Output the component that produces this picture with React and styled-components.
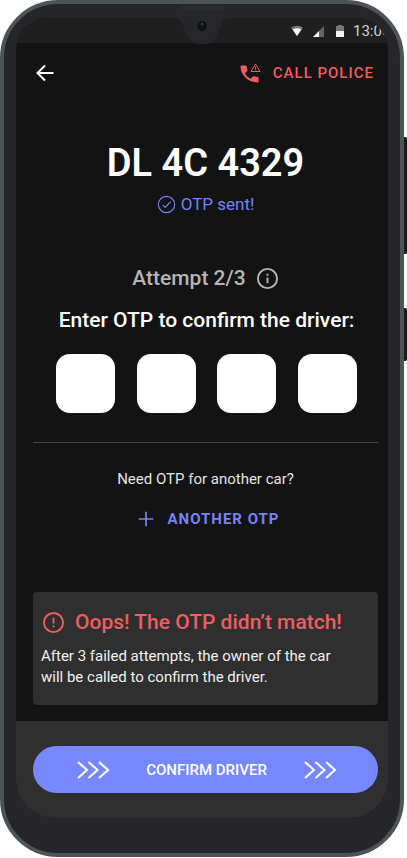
import React from "react";
import styled, { createGlobalStyle } from "styled-components";

const GlobalStyle = createGlobalStyle`
  *, *::before, *::after { box-sizing: border-box; }
  body { margin: 0; background: #ffffff; font-family: Roboto, "Open Sans", sans-serif; }
  button, input { font: inherit; }
`;

const Page = styled.div`
  display: flex;
  min-height: 100vh;
  padding: 0 3px 1px 0;
`;

const Phone = styled.div`
  position: relative;
  flex: 1;
  display: flex;
  min-width: 0;
  padding: 14px 12px 35px;
  border: 4px solid #4b5456;
  border-radius: 58px;
  background: #26252a;
`;

const SideButton = styled.span`
  position: absolute;
  top: ${(p) => p.$top}px;
  right: -7px;
  width: 3px;
  height: ${(p) => p.$size}px;
  border-radius: 0 2px 2px 0;
  background: #171b1b;
`;

const Notch = styled.svg`
  position: absolute;
  top: 0;
  left: 50%;
  width: 64px;
  height: 40px;
  transform: translateX(-50%);
`;

const Screen = styled.div`
  flex: 1;
  display: flex;
  flex-direction: column;
  min-width: 0;
  overflow: hidden;
  border-radius: 32px 32px 38px 38px;
  background: #131313;
`;

const StatusBar = styled.div`
  display: flex;
  align-items: center;
  justify-content: flex-end;
  height: 25px;
  background: #1f1f1f;
  color: #d0d0d0;
  font-size: 15px;
`;

const StatusIcons = styled.svg`
  width: 56px;
  height: 14px;
  margin-right: 6px;
`;

const Clock = styled.time`
  flex: none;
  width: 35px;
  white-space: nowrap;
`;

const TopBar = styled.header`
  display: flex;
  align-items: center;
  justify-content: space-between;
  padding: 16px 14px 0 17px;
`;

const PlainButton = styled.button`
  display: inline-flex;
  align-items: center;
  padding: 0;
  border: 0;
  background: none;
  color: ${(p) => p.$color};
  font-size: 15px;
  font-weight: 500;
  line-height: 24px;
  letter-spacing: ${(p) => (p.$wide ? "1px" : "normal")};
  gap: 11px;
  height: 28px;
  cursor: pointer;
`;

const Main = styled.main`
  flex: 1;
  display: flex;
  flex-direction: column;
  align-items: center;
  padding: 0 10px 16px 17px;
`;

const Plate = styled.h1`
  margin: 52px 0 0;
  color: #ffffff;
  font-size: 38px;
  font-weight: 600;
  line-height: 48px;
`;

const Sent = styled.p`
  display: flex;
  align-items: center;
  gap: 5px;
  margin: 5px 0 0;
  color: #7583f5;
  font-size: 17px;
  line-height: 24px;
`;

const Attempt = styled.p`
  display: flex;
  align-items: center;
  gap: 10px;
  margin: 50px 0 0;
  color: #b5b5b5;
  font-size: 21px;
  font-weight: 500;
  line-height: 24px;
`;

const OtpForm = styled.fieldset`
  display: flex;
  flex-direction: column;
  align-items: center;
  align-self: stretch;
  min-width: 0;
  margin: 0;
  padding: 0 21px 0 23px;
  border: 0;
`;

const OtpLegend = styled.legend`
  margin: 0 auto;
  padding: 17px 0;
  color: #ffffff;
  font-size: 21px;
  font-weight: 500;
  line-height: 26px;
  white-space: nowrap;
`;

const Digits = styled.div`
  display: flex;
  justify-content: space-between;
  align-self: stretch;
  margin-top: 4px;
`;

const Digit = styled.input`
  width: 59px;
  height: 59px;
  padding: 0;
  border: 0;
  border-radius: 14px;
  background: #ffffff;
  color: #131313;
  font-size: 28px;
  text-align: center;
`;

const Divider = styled.hr`
  align-self: stretch;
  height: 1px;
  margin: 29px 0 0;
  border: 0;
  background: #484848;
`;

const Question = styled.p`
  margin: 24px 0 0;
  color: #e4e4e4;
  font-size: 15px;
  line-height: 24px;
`;

const AnotherOtp = styled(PlainButton)`
  gap: 14px;
  margin-top: 14px;
  padding-left: 6px;
  font-weight: 700;
`;

const Alert = styled.section`
  align-self: stretch;
  margin-top: auto;
  padding: 16px 8px 17px;
  border-radius: 4px;
  background: #2f2f2f;
`;

const AlertTitle = styled.h2`
  display: flex;
  align-items: center;
  gap: 10px;
  margin: 0;
  padding-left: 1px;
  color: #ef5d5e;
  font-size: 21px;
  font-weight: 500;
  line-height: 28px;
  white-space: nowrap;
`;

const AlertText = styled.p`
  max-width: 310px;
  margin: 10px 0 0;
  color: #f0f0f0;
  font-size: 15px;
  line-height: 21px;
`;

const Footer = styled.footer`
  padding: 25px 10px 25px 17px;
  background: #2f2f2f;
`;

const Confirm = styled.button`
  display: flex;
  align-items: center;
  justify-content: space-between;
  width: 100%;
  height: 47px;
  padding: 0 41px 0 43px;
  border: 0;
  border-radius: 24px;
  background: #7788ff;
  color: #ffffff;
  font-size: 15px;
  font-weight: 500;
  cursor: pointer;
`;

function Icon({ size = 24, width = 2, children, ...rest }) {
  return (
    <svg width={size} height={size} viewBox="0 0 24 24" fill="none" stroke="currentColor" strokeWidth={width} aria-hidden="true" {...rest}>
      {children}
    </svg>
  );
}

function Chevrons() {
  return (
    <svg width="34" height="20" viewBox="0 0 34 20" fill="none" stroke="#fff" strokeWidth="2" aria-hidden="true">
      <path d="M2 2l9 8-9 8M12.500 2l9 8-9 8M23 2l9 8-9 8" />
    </svg>
  );
}

export default function App() {
  return (
    <Page>
      <GlobalStyle />
      <Phone>
        <SideButton $top={133} $size={117} />
        <SideButton $top={304} $size={53} />
        <Screen>
          <StatusBar>
            <StatusIcons viewBox="0 0 56 14" aria-hidden="true">
              <path d="M0 3.500Q6 0 12 3.500L6 12z" fill="#777" />
              <path d="M1.500 5.500Q6 3 10.500 5.500L6 12z" fill="#f2f2f2" />
              <path d="M22 13L33 2v11z" fill="#666" />
              <path d="M22 13l6-6v6z" fill="#f2f2f2" />
              <path d="M45 2h2V1h4v1h2v5h-8z" fill="#777" />
              <path d="M45 7h8v6h-8z" fill="#f2f2f2" />
            </StatusIcons>
            <Clock>13:00</Clock>
          </StatusBar>
          <TopBar>
            <PlainButton $color="#ffffff" aria-label="Back">
              <Icon>
                <path d="M20.500 12H5M12 4.500L4.500 12l7.500 7.500" strokeLinejoin="miter" />
              </Icon>
            </PlainButton>
            <PlainButton $color="#ef5d5e" $wide>
              <svg width="22" height="22" viewBox="0 0 22 22" aria-hidden="true">
                <path
                  d="M1.500 3.500h4.200q.8 0 1 .9.200 2 .8 3.600.2.600-.2 1.100L5 11.500c1.500 2.500 3 4 5.600 5.200l2.300-2.100q.5-.5 1.200-.3 1.800.6 3.700.7.800.1.800.9v3.600q0 1-1 1C8.300 20.500.500 13 .500 4.500q0-1 1-1z"
                  fill="currentColor"
                />
                <path d="M15.500 2l4.500 7.500h-9z" fill="none" stroke="currentColor" strokeLinejoin="round" />
                <path d="M15.500 4.500v2.300M15.500 7.300v1" stroke="currentColor" />
              </svg>
              CALL POLICE
            </PlainButton>
          </TopBar>
          <Main>
            <Plate>DL 4C 4329</Plate>
            <Sent>
              <Icon size={19} width={1.4}>
                <circle cx="12" cy="12" r="10.300" />
                <path d="M7.200 12.400l3.300 3.300 6.700-7.200" />
              </Icon>
              OTP sent!
            </Sent>
            <Attempt>
              Attempt 2/3
              <Icon size={23}>
                <circle cx="12" cy="12" r="10" />
                <path d="M12 11v6M12 7v2" />
              </Icon>
            </Attempt>
            <OtpForm>
              <OtpLegend>Enter OTP to confirm the driver:</OtpLegend>
              <Digits>
                {[1, 2, 3, 4].map((n) => (
                  <Digit key={n} type="text" inputMode="numeric" maxLength={1} aria-label={`OTP digit ${n}`} />
                ))}
              </Digits>
            </OtpForm>
            <Divider />
            <Question>Need OTP for another car?</Question>
            <AnotherOtp $color="#7583f5" $wide>
              <Icon size={16} width={2.6}>
                <path d="M12 1v22M1 12h22" />
              </Icon>
              ANOTHER OTP
            </AnotherOtp>
            <Alert role="alert">
              <AlertTitle>
                <Icon size={23}>
                  <circle cx="12" cy="12" r="10" />
                  <path d="M12 7v6M12 15v2" />
                </Icon>
                Oops! The OTP didn’t match!
              </AlertTitle>
              <AlertText>After 3 failed attempts, the owner of the car will be called to confirm the driver.</AlertText>
            </Alert>
          </Main>
          <Footer>
            <Confirm>
              <Chevrons />
              CONFIRM DRIVER
              <Chevrons />
            </Confirm>
          </Footer>
        </Screen>
        <Notch viewBox="0 0 64 40" aria-hidden="true">
          <path d="M4 14h1c4 0 6 2 8 7l3 8c3 8 7 11 12 11h8c5 0 9-3 12-11l3-8c2-5 4-7 8-7h1V13H4z" fill="#26252a" />
          <path d="M9 2h46l-2 2q-1 2-4 2H15q-3 0-4-2z" fill="#262d2f" />
          <circle cx="32" cy="22" r="8" fill="#23292c" />
          <circle cx="32" cy="22" r="5" fill="#0e1314" />
          <circle cx="32" cy="20" r="1" fill="#4a5558" />
        </Notch>
      </Phone>
    </Page>
  );
}
